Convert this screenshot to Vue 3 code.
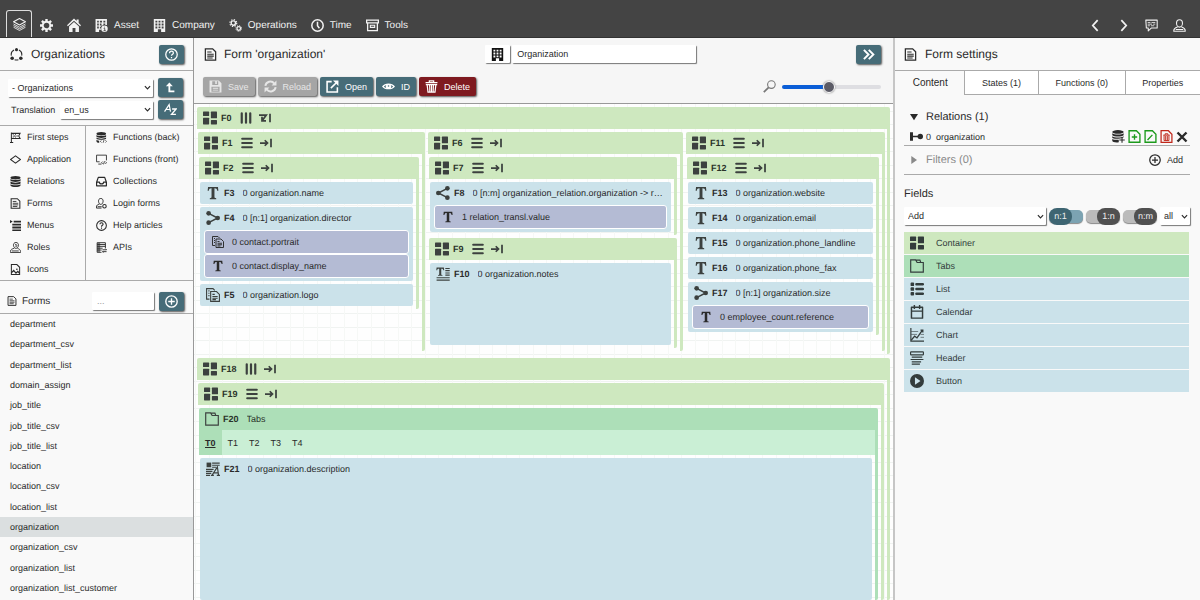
<script setup>
import { ref } from 'vue'

const navItems = [
  { icon: 'asset', label: 'Asset' },
  { icon: 'building', label: 'Company' },
  { icon: 'gears', label: 'Operations' },
  { icon: 'clock', label: 'Time' },
  { icon: 'archive', label: 'Tools' }
]

const sectionsLeft = [
  { icon: 'flag', label: 'First steps' },
  { icon: 'diamond', label: 'Application' },
  { icon: 'database', label: 'Relations' },
  { icon: 'file', label: 'Forms' },
  { icon: 'menu', label: 'Menus' },
  { icon: 'role', label: 'Roles' },
  { icon: 'image', label: 'Icons' }
]
const sectionsRight = [
  { icon: 'dbcode', label: 'Functions (back)' },
  { icon: 'screen', label: 'Functions (front)' },
  { icon: 'tray', label: 'Collections' },
  { icon: 'personcog', label: 'Login forms' },
  { icon: 'help', label: 'Help articles' },
  { icon: 'api', label: 'APIs' }
]

const forms = [
  'department', 'department_csv', 'department_list', 'domain_assign',
  'job_title', 'job_title_csv', 'job_title_list',
  'location', 'location_csv', 'location_list',
  'organization', 'organization_csv', 'organization_list', 'organization_list_customer'
]
const activeForm = ref('organization')

const actions = [
  { icon: 'save', label: 'Save', tone: 'off', disabled: true },
  { icon: 'reload', label: 'Reload', tone: 'off', disabled: true },
  { icon: 'open', label: 'Open', tone: 'teal' },
  { icon: 'eye', label: 'ID', tone: 'teal' },
  { icon: 'trash', label: 'Delete', tone: 'red' }
]

const columns = [
  {
    id: 'F1',
    groups: [
      {
        id: 'F2',
        fields: [
          { id: 'F3', icon: 'text', label: '0 organization.name' },
          {
            id: 'F4', icon: 'link1', label: '0 [n:1] organization.director',
            subs: [
              { icon: 'files', label: '0 contact.portrait' },
              { icon: 'text', label: '0 contact.display_name' }
            ]
          },
          { id: 'F5', icon: 'files', label: '0 organization.logo' }
        ]
      }
    ]
  },
  {
    id: 'F6',
    groups: [
      {
        id: 'F7',
        fields: [
          {
            id: 'F8', icon: 'share', label: '0 [n:m] organization_relation.organization -> r…',
            subs: [{ icon: 'text', label: '1 relation_transl.value' }]
          }
        ]
      },
      { id: 'F9', fields: [{ id: 'F10', icon: 'textarea', label: '0 organization.notes', tall: true }] }
    ]
  },
  {
    id: 'F11',
    groups: [
      {
        id: 'F12',
        fields: [
          { id: 'F13', icon: 'text', label: '0 organization.website' },
          { id: 'F14', icon: 'text', label: '0 organization.email' },
          { id: 'F15', icon: 'text', label: '0 organization.phone_landline' },
          { id: 'F16', icon: 'text', label: '0 organization.phone_fax' },
          {
            id: 'F17', icon: 'link1', label: '0 [n:1] organization.size',
            subs: [{ icon: 'text', label: '0 employee_count.reference' }]
          }
        ]
      }
    ]
  }
]

const formTabs = ['T0', 'T1', 'T2', 'T3', 'T4']
const activeFormTab = ref('T0')

const panelTabs = ['Content', 'States (1)', 'Functions (0)', 'Properties']
const activePanelTab = ref('Content')

const switches = ref([
  { label: 'n:1', on: true },
  { label: '1:n', on: false },
  { label: 'n:m', on: false }
])

const palette = [
  { icon: 'container', label: 'Container', tone: 'green' },
  { icon: 'folder', label: 'Tabs', tone: 'mint' },
  { icon: 'list', label: 'List', tone: 'blue' },
  { icon: 'calendar', label: 'Calendar', tone: 'blue' },
  { icon: 'chart', label: 'Chart', tone: 'blue' },
  { icon: 'header', label: 'Header', tone: 'blue' },
  { icon: 'play', label: 'Button', tone: 'blue' }
]

const zoom = ref(47)
const formTitle = ref('Organization')
const search = ref('')
</script>

<template>
  <div class="app">
    <svg class="sprite" aria-hidden="true">
      <symbol id="i-layers" viewBox="0 0 24 24"><g fill="none" stroke="currentColor" stroke-width="2" stroke-linejoin="round"><path d="M12 1 23 7 12 13 1 7z" /><path d="M1 11l11 6 11-6M1 14l11 6 11-6M1 17l11 6 11-6" stroke-width="1.6" /></g></symbol>
      <symbol id="i-gear" viewBox="0 0 24 24"><g fill="none" stroke="currentColor"><circle cx="12" cy="12" r="7" stroke-width="3.6" /><path d="M12 0v4.500M12 19.500V24M0 12h4.500M19.500 12H24M3.500 3.500l3.200 3.200M17.300 17.300l3.200 3.200M20.500 3.500l-3.200 3.200M6.700 17.300l-3.200 3.200" stroke-width="4.400" /></g></symbol>
      <symbol id="i-home" viewBox="0 0 24 24"><path fill="currentColor" d="M12 1l4.500 4.200V2.500h3.500v6l4 4-1.500 1.700L12 4.800 1.500 14.200 0 12.500zM12 7l8.500 7.500V24H14.500v-7h-5v7H3.500v-9.500z" /></symbol>
      <symbol id="i-building" viewBox="0 0 24 24"><path fill="currentColor" fill-rule="evenodd" d="M1.500 0h21v24h-7.500v-5H9v5H1.500zM4.500 3v3.500h3.500V3zM10.250 3v3.500h3.500V3zM16 3v3.500h3.500V3zM4.500 8.500V12h3.500V8.500zM10.250 8.500V12h3.500V8.500zM16 8.500V12h3.500V8.500zM4.500 14v3.500h3.500V14zM10.250 14v3h3.500v-3zM16 14v3.500h3.500V14z" /></symbol>
      <symbol id="i-asset" viewBox="0 0 24 24"><path fill="currentColor" fill-rule="evenodd" d="M1 0h21v11h-3V8.500h-3.500V11L12 13v-4.500H9V12h2v2.500H9v3h2V20H7.500v4H1zM4 3v3.500h3V3zM9 3v3.500h4V3zM15.500 3v3.500H19V3zM4 8.500V12h3V8.500zM4 14v3.500h3V14z" /><circle cx="17.500" cy="18" r="6" fill="currentColor" /><path d="M17.500 14.200v1.600M16 17.500h2v4M15.800 21.500h4" stroke="#444" stroke-width="1.500" fill="none" /></symbol>
      <symbol id="i-gears" viewBox="0 0 24 24"><g fill="none" stroke="currentColor"><circle cx="8" cy="7.500" r="4" stroke-width="2.500" /><circle cx="8" cy="7.500" r="6.300" stroke-width="2.200" stroke-dasharray="2.500 2.450" /><circle cx="18" cy="17.500" r="3.300" stroke-width="2.300" /><circle cx="18" cy="17.500" r="5.200" stroke-width="1.800" stroke-dasharray="2.100 1.980" /></g></symbol>
      <symbol id="i-clock" viewBox="0 0 24 24"><g fill="none" stroke="currentColor" stroke-width="2.800"><circle cx="12" cy="12" r="10.500" /><path d="M12 5v7.500l3.500 4.500" /></g></symbol>
      <symbol id="i-archive" viewBox="0 0 24 24"><g fill="none" stroke="currentColor" stroke-width="2.400"><path d="M1.200 2.200h21.600v5H1.200zM3 7.500v14h18v-14" /><path d="M8 11.500h8v4H8z" stroke-width="2" /></g></symbol>
      <symbol id="i-left" viewBox="0 0 24 24"><path d="M16 2 7 12l9 10" fill="none" stroke="currentColor" stroke-width="3.200" /></symbol>
      <symbol id="i-right" viewBox="0 0 24 24"><path d="M8 2l9 10-9 10" fill="none" stroke="currentColor" stroke-width="3.200" /></symbol>
      <symbol id="i-chat" viewBox="0 0 24 24"><g fill="none" stroke="currentColor" stroke-width="2"><path d="M1.500 2h21v14.500H12L6 22v-5.500H2.500z" stroke-linejoin="round" /><path d="M5 6.500h5M12 6.500h7M5 9.500h8M15 9.500h4M5 12.500h4M11 12.500h6" stroke-width="1.500" /></g></symbol>
      <symbol id="i-person" viewBox="0 0 24 24"><g fill="none" stroke="currentColor" stroke-width="2"><path d="M12 1.500c4 0 5.500 3 5.500 6.500S15 15 12 15s-5.500-3.500-5.500-7S8 1.500 12 1.500z" /><path d="M8.500 14.500c-4 1.500-7 2.500-7 6.500v1.500h21V21c0-4-3-5-7-6.500M5 19.500h14" /></g></symbol>
      <symbol id="i-cycle" viewBox="0 0 24 24"><g fill="none" stroke="currentColor" stroke-width="2"><path d="M7.500 3.500A9.500 9.500 0 0 0 2.500 14M16.500 3.500A9.500 9.500 0 0 1 21.500 14M8.500 21.500a10 10 0 0 0 7 0" /></g><g fill="currentColor"><circle cx="12" cy="3" r="2.800" /><circle cx="4" cy="19" r="3.300" /><circle cx="20" cy="19" r="3.300" /></g></symbol>
      <symbol id="i-help" viewBox="0 0 24 24"><g fill="none" stroke="currentColor" stroke-width="2.300"><circle cx="12" cy="12" r="10.600" /><path d="M8.500 9.500c0-5 7-4.500 7-.5 0 2.500-3.500 2.500-3.500 5.500M12 16.500v2.500" /></g></symbol>
      <symbol id="i-up" viewBox="0 0 24 24"><path d="M9.500 8v12.500h11" fill="none" stroke="currentColor" stroke-width="4" /><path d="M9.500 1 17 9.500H2z" fill="currentColor" /></symbol>
      <symbol id="i-az" viewBox="0 0 24 24"><g fill="none" stroke="currentColor"><path d="M1 16 9.500 3l2.500 13M4.500 12h7" stroke-width="2.200" /><path d="M15 11h7.500l-8.500 10h8" stroke-width="2.500" /></g></symbol>
      <symbol id="i-flag" viewBox="0 0 24 24"><g fill="none" stroke="currentColor" stroke-width="2.200"><path d="M3 1v22M0 23h7M3 3h19l-3 5.500 3 5.500H3M6 6h2M11 6h2M8 8.500h3M14 8.500h3M6 11h2M11 11h2" /></g></symbol>
      <symbol id="i-diamond" viewBox="0 0 24 24"><path d="M12 4 23 12l-11 8L1 12z" fill="none" stroke="currentColor" stroke-width="2.400" /></symbol>
      <symbol id="i-database" viewBox="0 0 24 24"><g fill="currentColor"><ellipse cx="12" cy="3.700" rx="11" ry="3.700" /><path d="M1 6.500c3 3.200 19 3.200 22 0v4c-3 3.200-19 3.200-22 0zM1 12.200c3 3.200 19 3.200 22 0v4c-3 3.200-19 3.200-22 0zM1 18c3 3.200 19 3.200 22 0v2.500c-3 4.500-19 4.500-22 0z" /></g></symbol>
      <symbol id="i-dbcode" viewBox="0 0 24 24"><g fill="currentColor"><ellipse cx="11.500" cy="3.700" rx="10.500" ry="3.700" /><path d="M1 6.500c3 3.200 18 3.200 21 0v4c-3 3.200-18 3.200-21 0zM1 12.200c3 3.200 18 3.200 21 0v2.500c-3 3-18 3-21 0zM1 17c2 1.500 4 2 6 2v4.500c-3 0-6-1-6-3.500z" /></g><path d="M12 18l-2.500 2.500L12 23M20.500 18l2.500 2.500-2.500 2.500M17.500 17.500l-2 6" fill="none" stroke="currentColor" stroke-width="1.600" /></symbol>
      <symbol id="i-dbadd" viewBox="0 0 24 24"><g fill="currentColor"><ellipse cx="11" cy="3.500" rx="10.500" ry="3.300" /><path d="M.5 6c3 3 18 3 21 0v3.700c-3 3-18 3-21 0zM.5 11.500c3 3 18 3 21 0v1.700c-5 3-18 4-21 1.500zM.5 16.500c3 1.500 8 2 12 1.500v4.500c-5 1-12 0-12-2.500z" /></g><path d="M18.500 13.500v10M13.500 18.500h10" stroke="currentColor" stroke-width="2" /></symbol>
      <symbol id="i-file" viewBox="0 0 24 24"><g fill="none" stroke="currentColor" stroke-width="2.300"><path d="M2.500 1.500H16L21.500 7v15.500h-19z" /><path d="M6 7.500h8M6 11.500h12M6 15h12M6 18.500h10" stroke-width="1.900" /></g></symbol>
      <symbol id="i-menu" viewBox="0 0 24 24"><g fill="currentColor"><path d="M0 0l6 3.500L0 7zM8 1.500h16v4H8zM5 8h19v4H5zM5 14.300h19v4H5zM5 20.500h19V24H5z" /></g></symbol>
      <symbol id="i-role" viewBox="0 0 24 24"><g fill="none" stroke="currentColor" stroke-width="1.900"><path d="M13 1c4 0 5.500 3 5.500 6S16 14 13 14s-5.500-4-5.500-7S9 1 13 1zM9.500 13.500C5 15 1 16 1 20.500V23h22v-2.500c0-4-4-5.500-7-7M4 19.500h15M11 6c2-2 4 0 4 2s-3 3-3 0" /></g></symbol>
      <symbol id="i-image" viewBox="0 0 24 24"><g fill="none" stroke="currentColor" stroke-width="2.200"><path d="M3 1.200h12l6 6V22.800H3z" /><path d="M3 19.500l5-5.500 5 6 4-4 4 4.500" stroke-width="2.800" /></g><circle cx="15" cy="11.500" r="1.800" fill="currentColor" /></symbol>
      <symbol id="i-screen" viewBox="0 0 24 24"><g fill="none" stroke="currentColor" stroke-width="1.900"><path d="M8 17H1.200V2.500h21.600V14M5 22h7M14.500 16.500 12 19l2.500 2.500M20.500 16.500 23 19l-2.500 2.500M18.500 16l-2 6.500" /></g></symbol>
      <symbol id="i-tray" viewBox="0 0 24 24"><path d="M1.300 13.500 5 3h14l3.700 10.500V21.500H1.300zM1.300 13.500h6.200c0 5 9 5 9 0h6.200" fill="none" stroke="currentColor" stroke-width="2.600" stroke-linejoin="round" /></symbol>
      <symbol id="i-personcog" viewBox="0 0 24 24"><g fill="none" stroke="currentColor" stroke-width="2"><path d="M10.500 1c4 0 5 3 5 6s-2 7-5 7-5-4-5-7 1-6 5-6zM7.500 13.500c-4 1-6.500 2-6.500 6V22h11M3.500 19h9" /><circle cx="18.500" cy="18" r="3.800" stroke-width="2.300" /></g></symbol>
      <symbol id="i-api" viewBox="0 0 24 24"><g fill="none" stroke="currentColor" stroke-width="2"><path d="M12 22.500H2.500V1.500h18v12M2.500 5.500h18M2.500 9.500h18M2.500 13.500h12M2.500 17.500h10" /><path d="M14 17h9l-2.500-2.500M23 21h-9l2.500 2.500" /></g><path d="M3 2h6v20H3z" fill="currentColor" opacity=".55" /></symbol>
      <symbol id="i-plus" viewBox="0 0 24 24"><g fill="none" stroke="currentColor" stroke-width="2.500"><circle cx="12" cy="12" r="10.500" /><path d="M12 6v12M6 12h12" /></g></symbol>
      <symbol id="i-save" viewBox="0 0 24 24"><path fill="currentColor" fill-rule="evenodd" d="M1 1h17l5 5v17H1zM6 2.500V9h11V2.500h-2.500V7.500H11.500V2.500zM4.500 12.500V21.500h15v-9zM7 14.500h10v1.500H7zM7 18h10v1.500H7z" /></symbol>
      <symbol id="i-reload" viewBox="0 0 24 24"><g fill="none" stroke="currentColor" stroke-width="3.600"><path d="M2.500 11A9.300 9.300 0 0 1 19 6.500M21.500 13A9.300 9.300 0 0 1 5 17.500" /></g><path d="M23 1v9h-9zM1 23v-9h9z" fill="currentColor" /></symbol>
      <symbol id="i-open" viewBox="0 0 24 24"><g fill="none" stroke="currentColor" stroke-width="2.900"><path d="M10.500 3H2v19h19v-8.500M9 15 19 5" /></g><path d="M13 1h10v10z" fill="currentColor" /></symbol>
      <symbol id="i-eye" viewBox="0 0 24 24"><path fill="currentColor" fill-rule="evenodd" d="M0 12c5-7.500 19-7.500 24 0-5 7-19 7-24 0zM3.500 12c1 1.500 3 2.500 4.500 3-1.500-2-1.500-4 0-6-2 .7-3.500 1.500-4.500 3zM20.500 12c-1-1.500-2.500-2.300-4.500-3 1.500 2 1.500 4 0 6 2-.5 3.500-1.500 4.500-3zM12 9.500a1.500 1.500 0 1 0 0 3 1.500 1.500 0 0 0 0-3z" /></symbol>
      <symbol id="i-trash" viewBox="0 0 24 24"><g fill="none" stroke="currentColor" stroke-width="2.200"><path d="M1 5h22M8 4.500V1.500h8v3M1.500 8.500h21M4 9l1.500 13.500h13L20 9M8.500 9l.5 13M12 9v13M15.500 9l-.5 13" /></g></symbol>
      <symbol id="i-forward" viewBox="0 0 24 24"><path d="M3.500 3.500 12 12l-8.500 8.500M12.500 3.500 21 12l-8.500 8.500" fill="none" stroke="currentColor" stroke-width="3.600" /></symbol>
      <symbol id="i-search" viewBox="0 0 24 24"><g fill="none" stroke="currentColor"><circle cx="15.500" cy="8.500" r="7" stroke-width="2" /><path d="M10.500 13.500 1.500 22.500" stroke-width="3.200" /></g></symbol>
      <symbol id="i-container" viewBox="0 0 24 24"><g fill="currentColor"><rect x="0" y="1" width="10.500" height="7.500" rx="1" /><rect x="0" y="11.500" width="10.500" height="11.500" rx="1" /><rect x="13.500" y="1" width="10.500" height="11.500" rx="1" /><rect x="13.500" y="15.500" width="10.500" height="7.500" rx="1" /></g></symbol>
      <symbol id="i-rows" viewBox="0 0 24 24"><path d="M2.500 3.500h19M2.500 12h19M2.500 20.500h19" stroke="currentColor" stroke-width="4.400" stroke-linecap="round" /></symbol>
      <symbol id="i-cols" viewBox="0 0 24 24"><path d="M3.500 2.500v19M12 2.500v19M20.500 2.500v19" stroke="currentColor" stroke-width="4.400" stroke-linecap="round" /></symbol>
      <symbol id="i-nowrap" viewBox="0 0 24 24"><path d="M0 12h15M9.500 6.500 15 12l-5.500 5.500M22 3.500v17" fill="none" stroke="currentColor" stroke-width="3.500" /></symbol>
      <symbol id="i-wrap" viewBox="0 0 24 24"><path d="M0 6h14.500L7 16.500M6 9.500v8h8M22 3.500v17" fill="none" stroke="currentColor" stroke-width="3.500" /></symbol>
      <symbol id="i-text" viewBox="0 0 24 24"><path fill="currentColor" d="M3.500 1.500h17l.7 6.500h-2c-.4-3-1.600-4.200-4.700-4.200V19c0 1.500.8 1.800 3 2v1.500h-11V21c2.200-.2 3-.5 3-2V3.800C6.400 3.800 5.200 5 4.800 8h-2z" /></symbol>
      <symbol id="i-textarea" viewBox="0 0 24 24"><path fill="currentColor" d="M1 1h12.500l.5 4.500h-1.500C12.200 3.600 11.500 3 9 3v9.500c0 1 .5 1.200 2 1.300V15H3.500v-1.200c1.500-.1 2-.3 2-1.300V3C3 3 2.300 3.600 2 5.500H.5z" /><path d="M16 2.500h7.500M16 6.300h7.500M16 10.200h7.500M16 14h7.500M1 18.500h22.500M1 22.500h22.500" stroke="currentColor" stroke-width="1.900" /></symbol>
      <symbol id="i-richtext" viewBox="0 0 24 24"><path d="M1 1h8v8H1z" fill="currentColor" /><path d="M10.500 2h13M10.500 5.500h13M10.500 9h7M0 12.500h13M0 16h11M0 19.500h9M0 23h7" stroke="currentColor" stroke-width="2" /><path d="M10.500 22.500 19.500 8.500l2 14M13 18.500h8M8.500 23h5M18.500 23h5.500" fill="none" stroke="currentColor" stroke-width="2" /></symbol>
      <symbol id="i-link1" viewBox="0 0 24 24"><g fill="currentColor"><circle cx="4.500" cy="4" r="4" /><circle cx="4.500" cy="20" r="4" /><circle cx="20" cy="12" r="4" /></g><path d="M4.500 4 20 12 4.500 20" fill="none" stroke="currentColor" stroke-width="2.500" /></symbol>
      <symbol id="i-share" viewBox="0 0 24 24"><g fill="currentColor"><circle cx="19.500" cy="4" r="4" /><circle cx="19.500" cy="20" r="4" /><circle cx="4" cy="12" r="4" /></g><path d="M19.500 4 4 12l15.500 8" fill="none" stroke="currentColor" stroke-width="2.500" /></symbol>
      <symbol id="i-files" viewBox="0 0 24 24"><g fill="none" stroke="currentColor" stroke-width="1.900"><path d="M6 19H1V1h11l3 3M4 5h2M4 9h2M4 13h2" /><path d="M8 6h10l5 5v12H8zM11 11h4M11 14.500h9M11 17.500h9M11 20h6" /></g></symbol>
      <symbol id="i-folder" viewBox="0 0 24 24"><path d="M1.200 22.500V1.500h8.500l2.500 4.500h10.600v16.500zM10 2h7l1.500 4" fill="none" stroke="currentColor" stroke-width="2" /></symbol>
      <symbol id="i-list" viewBox="0 0 24 24"><g fill="currentColor"><rect x="1" y="1" width="6" height="6" rx="1.500" /><rect x="1" y="9" width="6" height="6" rx="1.500" /><rect x="1" y="17" width="6" height="6" rx="1.500" /></g><path d="M11 4h11M11 12h11M11 20h11" stroke="currentColor" stroke-width="4.200" stroke-linecap="round" /></symbol>
      <symbol id="i-calendar" viewBox="0 0 24 24"><path d="M2.500 4h19v18.500h-19zM2.500 10.500h19M7.500 0v7M16.500 0v7" fill="none" stroke="currentColor" stroke-width="2.500" stroke-linejoin="round" /></symbol>
      <symbol id="i-chart" viewBox="0 0 24 24"><path d="M1.500 0v22.500H24" fill="none" stroke="currentColor" stroke-width="2" /><path d="M2 21l6-7 4 3 9-13M18 3.500h4v4" fill="none" stroke="currentColor" stroke-width="2.200" /><path d="M2 6h12M2 11h10M18 11h6M18 16h6" stroke="currentColor" stroke-width="1" /></symbol>
      <symbol id="i-header" viewBox="0 0 24 24"><g fill="none" stroke="currentColor" stroke-width="2"><rect x="1" y="1.500" width="22" height="5" rx="1" /><path d="M3 10.500h18M1 14.500h22M3 18.500h16M3 22.500h14" /></g></symbol>
      <symbol id="i-play" viewBox="0 0 24 24"><path fill="currentColor" fill-rule="evenodd" d="M12 0a12 12 0 1 1 0 24 12 12 0 0 1 0-24zM8.500 5.500v13L18 12z" /></symbol>
      <symbol id="i-source" viewBox="0 0 24 24"><path d="M0 4h5.500v16H0zM5 10.500h12v3H5z" fill="currentColor" /><circle cx="19" cy="12" r="5" fill="currentColor" /></symbol>
      <symbol id="i-fileadd" viewBox="0 0 24 24"><g fill="none" stroke="currentColor" stroke-width="2.500"><path d="M2 1.300h13.500L22 8v14.700H2zM12 8v10M7 13h10" /></g></symbol>
      <symbol id="i-fileedit" viewBox="0 0 24 24"><g fill="none" stroke="currentColor" stroke-width="2.500"><path d="M2 1.300h13.500L22 8v14.700H2zM6.500 18.500l9-9.500" /></g></symbol>
      <symbol id="i-filedel" viewBox="0 0 24 24"><g fill="none" stroke="currentColor" stroke-width="2.300"><path d="M2 1.300h13.500L22 8v14.700H2z" /><path d="M6 9.500h12M9.500 9V7h5v2M7.500 10v9.500h9V10M10.500 11v8M13.500 11v8" stroke-width="1.800" /></g></symbol>
      <symbol id="i-close" viewBox="0 0 24 24"><path d="M3 3l18 18M21 3 3 21" stroke="currentColor" stroke-width="4.800" /></symbol>
      <symbol id="i-chevron" viewBox="0 0 24 24"><path d="M3 7.500l9 9 9-9" fill="none" stroke="currentColor" stroke-width="4" /></symbol>
      <symbol id="i-tridown" viewBox="0 0 24 24"><path d="M0 3h24L12 22z" fill="currentColor" /></symbol>
      <symbol id="i-triright" viewBox="0 0 24 24"><path d="M4 0l17 12L4 24z" fill="currentColor" /></symbol>
    </svg>

    <header class="topbar">
      <nav class="main-nav">
        <a href="#" class="builder" aria-label="Builder"><svg class="i13"><use href="#i-layers" /></svg></a>
        <a href="#" aria-label="Settings"><svg class="i13"><use href="#i-gear" /></svg></a>
        <a href="#" aria-label="Home"><svg class="i14"><use href="#i-home" /></svg></a>
        <a v-for="n in navItems" :key="n.label" href="#"><svg class="i13"><use :href="'#i-' + n.icon" /></svg>{{ n.label }}</a>
      </nav>
      <div class="user-nav">
        <button aria-label="Back"><svg class="i13"><use href="#i-left" /></svg></button>
        <button aria-label="Forward"><svg class="i13"><use href="#i-right" /></svg></button>
        <button aria-label="Feedback"><svg class="i13"><use href="#i-chat" /></svg></button>
        <button aria-label="Account"><svg class="i13"><use href="#i-person" /></svg></button>
      </div>
    </header>

    <div class="body">
      <aside class="sidebar">
        <div class="panel-head">
          <svg class="i13"><use href="#i-cycle" /></svg>
          <h1>Organizations</h1>
          <button class="btn teal square" aria-label="Help"><svg class="i13"><use href="#i-help" /></svg></button>
        </div>

        <div class="pickers">
          <div class="picker-row">
            <span class="select grow">
              <select aria-label="Module"><option>- Organizations</option></select>
              <svg class="chev"><use href="#i-chevron" /></svg>
            </span>
            <button class="btn teal square" aria-label="Parent module"><svg class="i11"><use href="#i-up" /></svg></button>
          </div>
          <div class="picker-row">
            <label for="lang">Translation</label>
            <span class="select grow">
              <select id="lang"><option>en_us</option></select>
              <svg class="chev"><use href="#i-chevron" /></svg>
            </span>
            <button class="btn teal square" aria-label="Translate"><svg class="i13"><use href="#i-az" /></svg></button>
          </div>
        </div>

        <nav class="sections">
          <div class="section-col first">
            <a v-for="s in sectionsLeft" :key="s.label" href="#"><svg class="i11"><use :href="'#i-' + s.icon" /></svg>{{ s.label }}</a>
          </div>
          <div class="section-col">
            <a v-for="s in sectionsRight" :key="s.label" href="#"><svg class="i11"><use :href="'#i-' + s.icon" /></svg>{{ s.label }}</a>
          </div>
        </nav>

        <div class="forms-head">
          <svg class="i10"><use href="#i-file" /></svg>
          <h2>Forms</h2>
          <input v-model="search" class="box filter" type="text" placeholder="..." aria-label="Filter forms" />
          <button class="btn teal square" aria-label="Add form"><svg class="i13"><use href="#i-plus" /></svg></button>
        </div>
        <nav class="form-list">
          <a v-for="f in forms" :key="f" href="#" :class="{ active: f === activeForm }" @click.prevent="activeForm = f">{{ f }}</a>
        </nav>
      </aside>

      <main class="editor">
        <div class="editor-head">
          <div class="title-row">
            <div class="title">
              <svg class="i13"><use href="#i-file" /></svg>
              <h1>Form 'organization'</h1>
            </div>
            <div class="title-edit">
              <button class="box icon-btn" aria-label="Form icon"><svg class="i13"><use href="#i-building" /></svg></button>
              <input v-model="formTitle" class="box title-input" type="text" aria-label="Form title" />
            </div>
            <button class="btn teal square" aria-label="Toggle settings"><svg class="i13"><use href="#i-forward" /></svg></button>
          </div>
          <div class="tool-row">
            <button v-for="a in actions" :key="a.label" class="btn" :class="a.tone" :disabled="a.disabled">
              <svg class="i13"><use :href="'#i-' + a.icon" /></svg>{{ a.label }}
            </button>
            <label class="zoom">
              <svg class="i13"><use href="#i-search" /></svg>
              <input v-model="zoom" type="range" min="0" max="100" aria-label="Zoom" :style="{ '--fill': zoom + '%' }" />
            </label>
          </div>
        </div>

        <div class="canvas">
          <section class="container">
            <div class="bar">
              <svg class="i14"><use href="#i-container" /></svg><b>F0</b>
              <svg class="opt"><use href="#i-cols" /></svg><svg class="opt"><use href="#i-wrap" /></svg>
            </div>
            <div class="columns">
              <section v-for="c in columns" :key="c.id" class="container">
                <div class="bar">
                  <svg class="i14"><use href="#i-container" /></svg><b>{{ c.id }}</b>
                  <svg class="opt"><use href="#i-rows" /></svg><svg class="opt"><use href="#i-nowrap" /></svg>
                </div>
                <div class="stack">
                  <section v-for="g in c.groups" :key="g.id" class="container">
                    <div class="bar">
                      <svg class="i14"><use href="#i-container" /></svg><b>{{ g.id }}</b>
                      <svg class="opt"><use href="#i-rows" /></svg><svg class="opt"><use href="#i-nowrap" /></svg>
                    </div>
                    <div class="stack">
                      <div v-for="f in g.fields" :key="f.id" class="field" :class="{ tall: f.tall }">
                        <div class="line">
                          <svg class="i14"><use :href="'#i-' + f.icon" /></svg><b>{{ f.id }}</b>
                          <span class="label">{{ f.label }}</span>
                        </div>
                        <div v-if="f.subs" class="subs">
                          <div v-for="s in f.subs" :key="s.label" class="sub">
                            <svg class="i12"><use :href="'#i-' + s.icon" /></svg><span>{{ s.label }}</span>
                          </div>
                        </div>
                      </div>
                    </div>
                  </section>
                </div>
              </section>
            </div>
          </section>

          <section class="container fill">
            <div class="bar">
              <svg class="i14"><use href="#i-container" /></svg><b>F18</b>
              <svg class="opt"><use href="#i-cols" /></svg><svg class="opt"><use href="#i-nowrap" /></svg>
            </div>
            <div class="stack open">
              <section class="container fill">
                <div class="bar">
                  <svg class="i14"><use href="#i-container" /></svg><b>F19</b>
                  <svg class="opt"><use href="#i-rows" /></svg><svg class="opt"><use href="#i-nowrap" /></svg>
                </div>
                <div class="stack open">
                  <section class="container tabs fill">
                    <div class="bar">
                      <svg class="i14"><use href="#i-folder" /></svg><b>F20</b>
                      <span class="label">Tabs</span>
                    </div>
                    <div class="tab-strip">
                      <button v-for="t in formTabs" :key="t" :class="{ active: t === activeFormTab }" @click="activeFormTab = t">{{ t }}</button>
                    </div>
                    <div class="stack open">
                      <div class="field fill">
                        <div class="line">
                          <svg class="i14"><use href="#i-richtext" /></svg><b>F21</b>
                          <span class="label">0 organization.description</span>
                        </div>
                      </div>
                    </div>
                  </section>
                </div>
              </section>
            </div>
          </section>
        </div>
      </main>

      <aside class="settings">
        <div class="panel-head">
          <svg class="i13"><use href="#i-file" /></svg>
          <h1>Form settings</h1>
        </div>
        <div class="panel-tabs">
          <button v-for="t in panelTabs" :key="t" :class="{ active: t === activePanelTab }" @click="activePanelTab = t">{{ t }}</button>
        </div>
        <div class="panel-body">
          <div class="group-head">
            <svg class="i8"><use href="#i-tridown" /></svg><h2>Relations (1)</h2>
          </div>
          <div class="relation">
            <svg class="i13"><use href="#i-source" /></svg>
            <span class="grow">0 &nbsp;organization</span>
            <button aria-label="Add relation"><svg class="i13"><use href="#i-dbadd" /></svg></button>
            <button class="ok" aria-label="Create"><svg class="i13"><use href="#i-fileadd" /></svg></button>
            <button class="ok" aria-label="Edit"><svg class="i13"><use href="#i-fileedit" /></svg></button>
            <button class="danger" aria-label="Delete"><svg class="i13"><use href="#i-filedel" /></svg></button>
            <button aria-label="Remove"><svg class="i12"><use href="#i-close" /></svg></button>
          </div>
          <div class="group-head filters">
            <svg class="i8"><use href="#i-triright" /></svg><h2 class="grow">Filters (0)</h2>
            <button class="add"><svg class="i12"><use href="#i-plus" /></svg>Add</button>
          </div>
          <h2 class="fields-title">Fields</h2>
          <div class="field-tools">
            <span class="select grow">
              <select aria-label="Add field"><option>Add</option></select>
              <svg class="chev"><use href="#i-chevron" /></svg>
            </span>
            <label v-for="s in switches" :key="s.label" class="switch" :class="{ on: s.on }">
              <input v-model="s.on" type="checkbox" /><span>{{ s.label }}</span>
            </label>
            <span class="select all">
              <select aria-label="Field filter"><option>all</option></select>
              <svg class="chev"><use href="#i-chevron" /></svg>
            </span>
          </div>
          <ul class="palette">
            <li v-for="p in palette" :key="p.label" :class="p.tone"><svg class="i14"><use :href="'#i-' + p.icon" /></svg>{{ p.label }}</li>
          </ul>
        </div>
      </aside>
    </div>
  </div>
</template>

<style>
body { margin: 0; overflow: hidden; }
</style>

<style scoped>
.app {
  display: flex;
  flex-direction: column;
  height: 100vh;
  font-family: "Liberation Sans", Arial, sans-serif;
  font-size: 9px;
  color: #2a2a2a;
  background: #f9f9f9;
  text-rendering: geometricPrecision;
}
*, *::before { box-sizing: border-box; }
.sprite { position: absolute; width: 0; height: 0; }
svg { flex: none; display: block; }
.i8 { width: 8px; height: 8px; }
.i10 { width: 10px; height: 10px; }
.i11 { width: 11px; height: 11px; }
.i12 { width: 12px; height: 12px; }
.i13 { width: 13px; height: 13px; }
.i14 { width: 14px; height: 14px; }
.grow { flex: 1; }
h1, h2 { margin: 0; font-weight: normal; }
h1 { font-size: 12px; }
h2 { font-size: 11px; }
a { color: inherit; text-decoration: none; }
button, input, select { font: inherit; color: inherit; margin: 0; }
button { display: flex; align-items: center; border: 0; padding: 0; background: none; }

/* top bar */
.topbar {
  display: flex;
  justify-content: space-between;
  align-items: flex-end;
  height: 38px;
  flex: none;
  padding: 0 14px 0 6px;
  background: #444;
  border-bottom: 1px solid #333;
  color: #f2f2f2;
  font-size: 10px;
}
.main-nav { display: flex; align-items: flex-end; gap: 14px; }
.main-nav a { display: flex; align-items: center; gap: 6px; height: 24px; }
.main-nav .builder {
  justify-content: center;
  width: 26px;
  height: 27px;
  margin-right: -6px;
  border: 1px solid #ddd;
  border-bottom: 0;
  border-radius: 3px 3px 0 0;
}
.user-nav { display: flex; gap: 15px; height: 24px; }

.body { display: grid; grid-template-columns: 194px 1fr 307px; flex: 1; min-height: 0; }

/* shared controls */
.btn {
  gap: 6px;
  height: 19px;
  padding: 0 6px;
  border-radius: 2px;
  color: #fff;
  box-shadow: 1px 1px 2px #555;
}
.btn.teal { background: #466c78; }
.btn.red { background: #7f1a20; }
.btn.off { background: #a5a5a5; color: #e6e6e6; }
.square { width: 25px; justify-content: center; padding: 0; flex: none; }
.box, .select select {
  height: 18px;
  border: 0;
  border-radius: 1px;
  background: #fff;
  box-shadow: 1px 1px 1px #777;
  outline: none;
}
.select { display: grid; align-items: center; }
.select select { grid-area: 1 / 1; width: 100%; appearance: none; padding: 0 14px 0 4px; }
.chev { grid-area: 1 / 1; justify-self: end; width: 7px; height: 7px; margin-right: 2px; pointer-events: none; }

/* left panel */
.sidebar { display: flex; flex-direction: column; min-height: 0; border-right: 1px solid #999; }
.panel-head {
  display: flex;
  align-items: center;
  gap: 8px;
  height: 33px;
  flex: none;
  padding: 0 9px 0 10px;
  border-bottom: 1px solid #aaa;
}
.panel-head h1 { flex: 1; }
.pickers { display: flex; flex-direction: column; gap: 3px; padding: 7px 10px 6px 8px; border-bottom: 1px solid #aaa; }
.picker-row { display: flex; align-items: center; gap: 5px; height: 19px; }
.picker-row label { padding-left: 3px; }
.sections { display: grid; grid-template-columns: 86px 1fr; height: 155px; flex: none; border-bottom: 1px solid #aaa; }
.section-col { padding-left: 10px; }
.section-col.first { border-right: 1px solid #aaa; }
.section-col a { display: flex; align-items: center; gap: 6px; height: 22px; }
.forms-head {
  display: flex;
  align-items: center;
  gap: 5px;
  height: 33px;
  flex: none;
  padding: 8px 9px 0 7px;
  border-bottom: 1px solid #aaa;
}
.forms-head h2 { flex: 1; font-size: 10px; }
.filter { width: 62px; padding: 0 5px; }
.filter::placeholder { color: #999; }
.form-list { display: grid; grid-auto-rows: 1fr; flex: 1; min-height: 0; padding-bottom: 2px; }
.form-list a { display: flex; align-items: center; padding-left: 10px; }
.form-list .active { background: #dbdfe0; }

/* editor */
.editor { display: flex; flex-direction: column; min-width: 0; min-height: 0; overflow: hidden; }
.editor-head { flex: none; height: 66px; background: #f6f6f6; border-bottom: 1px solid #999; }
.title-row { display: flex; align-items: center; justify-content: space-between; height: 32px; padding: 0 12px 0 10px; }
.title { display: flex; align-items: center; gap: 7px; }
.title-edit { display: flex; gap: 2px; }
.icon-btn { width: 25px; justify-content: center; color: #111; }
.title-input { width: 184px; padding: 0 5px; }
.tool-row { display: flex; align-items: center; gap: 3px; height: 33px; padding: 0 12px 0 9px; }
.zoom { display: flex; align-items: center; gap: 6px; margin-left: auto; color: #777; }
.zoom input {
  appearance: none;
  width: 99px;
  height: 4px;
  border-radius: 2px;
  background: linear-gradient(to right, #0b5ed7 var(--fill), #dedee2 var(--fill));
}
.zoom input::-webkit-slider-thumb {
  appearance: none;
  width: 12px;
  height: 12px;
  border: 1px solid #fff;
  border-radius: 50%;
  background: #5b5b66;
  box-shadow: 0 0 2px #777;
}

.canvas {
  display: flex;
  flex-direction: column;
  gap: 4px;
  flex: 1;
  min-height: 0;
  padding: 3px 3px 0;
  background-color: #fefefe;
  background-image:
    linear-gradient(to right, #f6f8f6 1px, transparent 1px, transparent 14px, #f6f8f6 14px, #f6f8f6 15px, transparent 15px),
    linear-gradient(to bottom, #f0f3f1 1px, transparent 1px, transparent 14px, #f0f3f1 14px, #f0f3f1 15px, transparent 15px);
  background-size: 27px 27px;
  background-position: 1px -7px;
}
.container { display: flex; flex-direction: column; min-width: 0; border-right: 3px solid #cee8bf; border-radius: 2px; }
.container.tabs { border-color: #addfb8; }
.fill { flex: 1; min-height: 0; }
.bar, .line { display: flex; align-items: center; gap: 4px; height: 22px; flex: none; padding: 0 6px; white-space: nowrap; }
.bar { background: #cee8bf; border-radius: 2px 0 0 0; color: #2a332a; }
.tabs > .bar { background: #addfb8; }
.bar svg, .line svg { color: #3c413f; }
.opt { width: 12px; height: 12px; margin-left: 3px; }
.bar b + .opt { margin-left: 4px; }
.label { margin-left: 4px; overflow: hidden; text-overflow: ellipsis; }
.columns {
  display: grid;
  grid-template-columns: 227fr 255fr 199fr;
  gap: 3px;
  padding: 3px 2px 3px 1px;
}
.stack { display: flex; flex-direction: column; gap: 3px; padding: 3px 3px 3px 1px; }
.stack.open { flex: 1; min-height: 0; padding-bottom: 0; }
.field { background: #cbe2ea; border-radius: 2px; min-width: 0; }
.field.tall { height: 82px; }
.subs { padding: 1px 4px 3px; }
.sub {
  display: flex;
  align-items: center;
  gap: 8px;
  height: 24px;
  padding: 0 7px;
  border: 1px solid #fff;
  border-radius: 3px;
  background: #b4bbd4;
}
.tab-strip { display: flex; gap: 1px; height: 25px; flex: none; background: #caefd5; }
.tab-strip button { padding: 0 5px; }
.tab-strip .active { padding: 0 6px; background: #addfb8; font-weight: bold; text-decoration: underline; }

/* right panel */
.settings { min-width: 0; border-left: 2px solid #c6c6c6; }
.settings .panel-head { padding-left: 9px; }
.panel-tabs { display: flex; height: 24px; }
.panel-tabs button {
  flex: 1 1 auto;
  justify-content: center;
  padding: 0 16px;
  white-space: nowrap;
  background: #fff;
  border: 1px solid #aaa;
  border-width: 0 0 1px 1px;
}
.panel-tabs .active { font-size: 10px; background: none; border-color: transparent; }
.panel-body { padding: 11px 10px 0 9px; }
.group-head { display: flex; align-items: center; gap: 8px; height: 22px; padding-left: 6px; }
.relation { display: flex; align-items: center; gap: 3px; height: 18px; padding: 0 2px 0 6px; border-bottom: 1px solid #aaa; }
.relation .ok { color: #1c9a1c; }
.relation .danger { color: #c0281c; }
.filters { height: 29px; padding-right: 7px; border-bottom: 1px solid #aaa; color: #8a8a8a; }
.add { gap: 6px; color: #2a2a2a; }
.fields-title { line-height: 13px; margin: 13px 0 6px; }
.field-tools { display: flex; align-items: center; gap: 3px; }
.all { width: 30px; }
.switch { display: grid; align-items: center; width: 34px; }
.switch input { grid-area: 1 / 1; appearance: none; width: 34px; height: 13px; border-radius: 5px; background: #bbb; box-shadow: 0 1px 1px #888; }
.switch span {
  grid-area: 1 / 1;
  justify-self: end;
  width: 23px;
  height: 17px;
  line-height: 17px;
  border-radius: 8px;
  text-align: center;
  color: #eee;
  background: #505050;
  z-index: 1;
}
.switch.on input { background: #7ca3b2; }
.switch.on span { justify-self: start; background: #3e6572; }
.palette { display: grid; gap: 1px; margin: 7px 1px 0 0; padding: 0; list-style: none; }
.palette li { display: flex; align-items: center; gap: 12px; height: 22px; padding-left: 6px; color: #333c3c; }
.palette .green { background: #cee8bf; }
.palette .mint { background: #addfb8; }
.palette .blue { background: #cbe2ea; }
</style>
